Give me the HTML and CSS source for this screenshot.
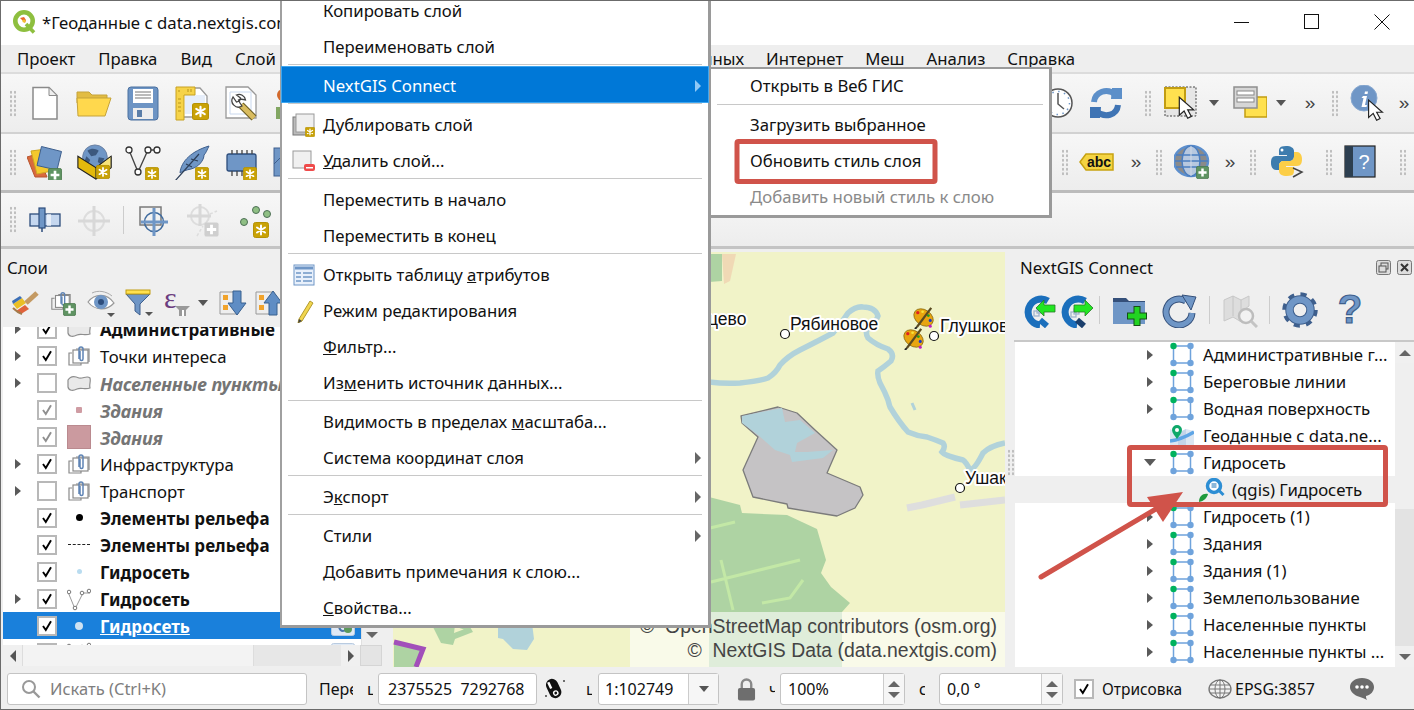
FILE: index.html
```html
<!DOCTYPE html>
<html lang="ru">
<head>
<meta charset="utf-8">
<title>QGIS</title>
<link rel="stylesheet" href="styles.css">
</head>
<body>
<svg class="sprite" xmlns="http://www.w3.org/2000/svg">
  <symbol id="bstar" viewBox="0 0 16 16"><rect x=".5" y=".5" width="15" height="15" rx="2" fill="#c9a206" stroke="#b59205"/><g stroke="#fff" stroke-width="2" stroke-linecap="round"><path d="M8 3.5v9M4 5.5l8 5M12 5.5l-8 5"/></g></symbol>
  <symbol id="bplus" viewBox="0 0 16 16"><rect x=".5" y=".5" width="15" height="15" rx="2" fill="#5f9362" stroke="#4b7a4e"/><path d="M8 3v10M3 8h10" stroke="#fff" stroke-width="3"/></symbol>
  <symbol id="bplusg" viewBox="0 0 16 16"><rect x=".5" y=".5" width="15" height="15" rx="2" fill="#cfcfcf"/><path d="M8 3v10M3 8h10" stroke="#fff" stroke-width="3"/></symbol>
  <symbol id="cursor" viewBox="0 0 14 20"><path d="M1 1v15l4-3.500 3 6 3-1.500-3-5.500h5z" fill="#fff" stroke="#222" stroke-width="1"/></symbol>
  <symbol id="info" viewBox="0 0 36 36"><circle cx="14" cy="13" r="13" fill="#6f96c6" stroke="#89a9d0"/><path d="M15 6.500h3l-.5 2.500h-3zM13 11h4l-2 9h2l-.5 2h-5l2-9h-2z" fill="#fff"/><use href="#cursor" x="16" y="14" width="19" height="23"/></symbol>
  <symbol id="doc" viewBox="0 0 36 36"><path d="M6 2.500h16l8 8V34H6z" fill="#fff" stroke="#8a8a8a" stroke-width="1.500"/><path d="M22 2.500v8h8z" fill="#eee" stroke="#8a8a8a"/></symbol>
  <symbol id="folder" viewBox="0 0 36 36"><path d="M1 18V7h12l3 3h15v8z" fill="#e2bc42" stroke="#c5a33a"/><path d="M1 13h34l-6 18H2z" fill="#ffd84d" stroke="#c5a33a"/></symbol>
  <symbol id="save" viewBox="0 0 36 36"><rect x="3" y="2" width="30" height="33" rx="3" fill="#6d94c4" stroke="#4b709f"/><rect x="8" y="4" width="20" height="14" fill="#fff"/><path d="M10 7h16M10 10h16M10 13h16" stroke="#777"/><rect x="8" y="23" width="20" height="11" fill="#eee"/><rect x="12" y="25" width="5" height="7" fill="#5b7ea8"/></symbol>
  <symbol id="tmpl" viewBox="0 0 36 36"><path d="M5 3h21l7 8v21H5z" fill="#fff" stroke="#999" stroke-width="1.300"/><path d="M11 10h20v19H11z" fill="#e6eefa"/><path d="M2 2h19v8H10v25H2z" fill="#f6d349" stroke="#c7a122"/><path d="M4 6h2M14 4v3M17 4v3M4 14h3M4 18h3M4 22h3M4 26h3" stroke="#b8951a"/><use href="#bstar" x="18" y="18" width="17" height="17"/></symbol>
  <symbol id="prop" viewBox="0 0 36 36"><path d="M3 2h22l8 8v23H3z" fill="#fff" stroke="#999" stroke-width="1.300"/><path d="M7 7h21v22H7z" fill="none" stroke="#c9d8ee"/><path d="M18 20l13 13" stroke="#6a5c22" stroke-width="7"/><path d="M18 20l13 13" stroke="#d9bc5f" stroke-width="5"/><path d="M10 12a6.500 6.500 0 0 0 9 9l-2-3-1.500-3 2-1 5 1a6.500 6.500 0 0 0-9-5l4 3-1 3-3 1z" fill="#fff" stroke="#444" stroke-width="1.300"/></symbol>
  <symbol id="part1" viewBox="0 0 36 36"><circle cx="11" cy="10" r="6" fill="#d2692c"/><rect x="4" y="22" width="9" height="12" fill="#82a662"/></symbol>
  <symbol id="addl" viewBox="0 0 36 36"><path d="M0 13l10-3 10 23-12 0z" fill="#d96a3c" stroke="#b75530"/><path d="M4 7l15-2 6 22-15 3z" fill="#f4c92d" stroke="#cfa823"/><path d="M14.500 2.500l20 5-4.500 18.500-20-4.500z" fill="#6f96c6" stroke="#3e5f8d"/><use href="#bplus" x="21" y="24" width="14" height="14"/></symbol>
  <symbol id="wms" viewBox="0 0 36 38"><circle cx="19" cy="14" r="13" fill="#6f96c6" stroke="#6a7fa0"/><path d="M11 7c5-3 8-2 12 0l-3 5-5 1zM23 14l6 1-3 7-4-3zM10 13l4 4-2 4-4-3z" fill="#3c587e"/><path d="M1 13l19 12 16-12v12L20 37 1 25z" fill="#e3b90c" stroke="#222" stroke-width="1.200"/><path d="M20 25l16-12v12L20 37z" fill="#f7e37a" stroke="#222"/><use href="#bstar" x="20" y="22" width="15" height="15"/></symbol>
  <symbol id="vec" viewBox="0 0 36 36"><path d="M4 6l9 22 10-22h9" fill="none" stroke="#444" stroke-width="1.300"/><g fill="#fff" stroke="#333" stroke-width="1.300"><circle cx="4" cy="6" r="3"/><circle cx="13" cy="28" r="3"/><circle cx="23" cy="6" r="3"/><circle cx="32" cy="6" r="3"/></g><use href="#bstar" x="20" y="23" width="14" height="14"/></symbol>
  <symbol id="feather" viewBox="0 0 36 36"><path d="M6 29C7 17 18 7 35 2c-2 4-3 7-5 9 0 5-5 12-13 14-5 1-8 2-11 4z" fill="#6f96c6" stroke="#3e5f8d"/><path d="M1 37L25 10M12 20l6 3M17 15l7 2" stroke="#2c3e58" stroke-width="1.200" fill="none"/><use href="#bstar" x="21" y="23" width="14" height="14"/></symbol>
  <symbol id="chip" viewBox="0 0 36 36"><rect x="4" y="10" width="29" height="17" rx="2" fill="#6f96c6" stroke="#2d4d7c" stroke-width="1.300"/><path d="M9 6v4M14 6v4M19 6v4M24 6v4M29 6v4M9 27v5M14 27v5M19 27v5" stroke="#444" stroke-width="1.300"/><use href="#bstar" x="20" y="23" width="14" height="14"/></symbol>
  <symbol id="part2" viewBox="0 0 36 36"><rect x="2" y="4" width="32" height="28" fill="#6f96c6" stroke="#3e5f8d"/><path d="M2 20l10-10 10 10" fill="none" stroke="#3e5f8d"/></symbol>
  <symbol id="snap" viewBox="0 0 36 36"><rect x="3" y="12" width="30" height="12" fill="#c5d7ef" stroke="#2d4d7c" stroke-width="1.300"/><rect x="20" y="12" width="4" height="12" fill="#fff" opacity=".6"/><rect x="12" y="6" width="6" height="20" fill="#6f96c6" stroke="#2d4d7c" stroke-width="1.200"/><path d="M15 26v4" stroke="#2d4d7c" stroke-width="1.500"/></symbol>
  <symbol id="crossg" viewBox="0 0 36 36"><circle cx="18" cy="19" r="10" fill="none" stroke="#ddd" stroke-width="2"/><path d="M18 4v30M2 19h32" stroke="#d8d8d8" stroke-width="3"/></symbol>
  <symbol id="crossb" viewBox="0 0 36 36"><rect x="5" y="5" width="21" height="18" fill="#f2f2f2" stroke="#7a7a7a" stroke-width="1.500"/><circle cx="19" cy="20" r="9.500" fill="none" stroke="#3e6a9e" stroke-width="1.500"/><path d="M19 6v28M6 20h27" stroke="#6f96c6" stroke-width="3"/></symbol>
  <symbol id="crossa" viewBox="0 0 36 36"><circle cx="15" cy="14" r="9" fill="none" stroke="#ddd" stroke-width="2"/><path d="M15 2v22M2 14h24" stroke="#d8d8d8" stroke-width="3"/><path d="M25 12l7-3M12 34l6-10" stroke="#ddd" stroke-width="1.500" stroke-dasharray="3 2"/><use href="#bplusg" x="19" y="20" width="15" height="15"/></symbol>
  <symbol id="dots" viewBox="0 0 36 36"><g fill="#8fbf84" stroke="#4c6f55"><circle cx="9" cy="20" r="3.500"/><circle cx="21" cy="8" r="3.500"/><circle cx="32" cy="12" r="3.500"/></g><use href="#bstar" x="18" y="20" width="16" height="16"/></symbol>
  <symbol id="clock" viewBox="0 0 36 36"><circle cx="18" cy="18" r="14" fill="#fff" stroke="#555" stroke-width="1.500"/><circle cx="18" cy="18" r="11.500" fill="none" stroke="#6f96c6" stroke-width="1.500" stroke-dasharray="1.500 4.500"/><path d="M18 8v11l6 5" fill="none" stroke="#555" stroke-width="1.500"/></symbol>
  <symbol id="refresh" viewBox="0 0 36 36"><path d="M6 17C7 7 19 2 28 10" fill="none" stroke="#5c8fc9" stroke-width="6"/><path d="M24 3h10v11H23z" fill="#5c8fc9"/><path d="M30 20C29 30 17 34 8 26" fill="none" stroke="#3f74b4" stroke-width="6"/><path d="M12 33H2V22h11z" fill="#3f74b4"/></symbol>
  <symbol id="sel" viewBox="0 0 36 36"><rect x="2" y="2" width="31" height="29" fill="#e6e6e6" stroke="#444" stroke-dasharray="2 1.500"/><rect x="2" y="3" width="20" height="20" fill="#ffe14f" stroke="#c29d12" stroke-width="2"/><use href="#cursor" x="14" y="11" width="19" height="24"/></symbol>
  <symbol id="form" viewBox="0 0 36 36"><rect x="14" y="12" width="22" height="20" fill="#ffe14f" stroke="#c29d12" stroke-width="1.500"/><rect x="3" y="2" width="23" height="21" fill="#d6d6d6" stroke="#8f8f8f" stroke-width="1.500"/><rect x="6" y="6" width="17" height="4" fill="#fff" stroke="#888"/><rect x="6" y="13" width="17" height="4" fill="#fff" stroke="#888"/></symbol>
  <symbol id="globe" viewBox="0 0 36 36"><ellipse cx="17" cy="17" rx="17" ry="15" fill="#8a8a8a" stroke="#5d8fcd" stroke-width="2.500"/><ellipse cx="17" cy="17" rx="9" ry="15" fill="#b7c8df" stroke="#4b7ec0" stroke-width="1.500"/><path d="M2 11h30M1 17h33M2 23h30" stroke="#4b7ec0" stroke-width="1.300"/><path d="M17 2v30" stroke="#d0d8e6"/><use href="#bplus" x="22" y="22" width="13" height="13"/></symbol>
  <symbol id="py" viewBox="0 0 36 36"><path d="M17 2c-7 0-7 3-7 6v3h8v1H7c-4 0-5 3-5 7s2 7 5 7h3v-4c0-3 2-5 5-5h6c2 0 4-2 4-4V7c0-3-3-5-8-5z" fill="#3d7cae"/><circle cx="13" cy="6" r="1.500" fill="#fff"/><path d="M18 32c7 0 7-3 7-6v-3h-8v-1h11c4 0 5-3 5-7s-2-7-5-7h-3v4c0 3-2 5-5 5h-6c-2 0-4 2-4 4v6c0 3 3 5 8 5z" fill="#fcce47"/><path d="M24 24l9 4-9 5" fill="none" stroke="#444" stroke-width="1.500"/></symbol>
  <symbol id="brush" viewBox="0 0 28 28"><path d="M2 15l9-6 4 5-9 6z" fill="#eabf26"/><path d="M5 22l9-6 4 4-8 5z" fill="#e0633c"/><path d="M2 15l9-6-2-2-8 5z" fill="#3c6fb6"/><path d="M15 14L26 4" stroke="#c49a63" stroke-width="5"/><path d="M2 19c3 3 6 5 9 6" stroke="#a47b4b" stroke-width="2" fill="none"/></symbol>
  <symbol id="grp" viewBox="0 0 24 24"><path d="M9 5h13v13" fill="none" stroke="#8a8a8a" stroke-width="1.200"/><rect x="6" y="6" width="15" height="13" fill="#fff" stroke="#8a8a8a" stroke-width="1.200"/><path d="M5 9H2v12h12v-2" fill="none" stroke="#8a8a8a" stroke-width="1.200"/><path d="M11 16V6a2 2 0 0 1 4 0v10a1.500 1.500 0 0 1-3 0V8" fill="none" stroke="#5f84b5" stroke-width="1.500" transform="translate(1 -1)"/></symbol>
  <symbol id="grpadd" viewBox="0 0 28 28"><use href="#grp" x="1" y="1" width="22" height="22"/><use href="#bplus" x="14" y="14" width="13" height="13"/></symbol>
  <symbol id="eye" viewBox="0 0 28 28"><path d="M1 13C8 4 20 4 27 14 20 22 8 22 1 13z" fill="#fff" stroke="#999" stroke-width="1.200"/><circle cx="14" cy="13" r="7" fill="#6f96c6"/><circle cx="14" cy="13" r="3" fill="#2d4d7c"/><path d="M5 4C11 1 19 2 25 7" fill="none" stroke="#aaa"/><path d="M20 24h8l-4 4z" fill="#555"/></symbol>
  <symbol id="filt" viewBox="0 0 28 28"><path d="M1 5h24L15 15v11l-5-4v-7z" fill="#6f96c6" stroke="#3e5f8d"/><rect x="1" y="1" width="24" height="4" fill="#ffe14f" stroke="#c29d12"/><path d="M20 23h8l-4 4z" fill="#555"/></symbol>
  <symbol id="down" viewBox="0 0 28 28"><path d="M1 3h18v22H1z" fill="#eee" stroke="#999"/><rect x="4" y="6" width="5" height="5" fill="#f1a32b"/><rect x="4" y="16" width="5" height="5" fill="#f1a32b"/><path d="M14 2h8v12h5L18 26 9 14h5z" fill="#5f8dc4" stroke="#39608f"/></symbol>
  <symbol id="up" viewBox="0 0 28 28"><path d="M1 3h18v22H1z" fill="#eee" stroke="#999"/><rect x="4" y="6" width="5" height="5" fill="#f1a32b"/><rect x="4" y="16" width="5" height="5" fill="#f1a32b"/><path d="M14 26h8V14h5L18 2 9 14h5z" fill="#5f8dc4" stroke="#39608f"/></symbol>
  <symbol id="poly" viewBox="0 0 24 24"><path d="M1 9c3-5 7-4 11-2 4 1 8-3 11 0 1 4-1 6 0 10-5 2-9-1-13 1-4 2-8 2-9-2z" fill="#e9e9e9" stroke="#8e8e8e" stroke-width="1.200"/></symbol>
  <symbol id="lin" viewBox="0 0 24 24"><path d="M1 5l7 17L16 6h7" fill="none" stroke="#9a9a9a"/><g fill="#fff" stroke="#777"><circle cx="2" cy="5" r="1.800"/><circle cx="8" cy="21" r="1.800"/><circle cx="15" cy="6" r="1.800"/><circle cx="22" cy="4" r="1.800"/></g></symbol>
  <symbol id="node" viewBox="0 -2 24 26"><path d="M3.500 2h17v17h-17z" fill="none" stroke="#6fa3dc" stroke-width="1.500"/><circle cx="20.500" cy="2" r="3.200" fill="#6fa3dc"/><circle cx="3.500" cy="19" r="3.200" fill="#6fa3dc"/><circle cx="20.500" cy="19" r="3.200" fill="#6fa3dc"/><circle cx="3.500" cy="2" r="3.200" fill="#00b25e"/></symbol>
  <symbol id="geo" viewBox="0 -2 24 26"><path d="M0 4l8 4 8-4 8 2v18l-8-2-8 2-8-2z" fill="#dbe6f2"/><path d="M8 8l8-4v18l-8 2z" fill="#c3d4e8"/><path d="M0 16c8-1 14-3 24-9" stroke="#5ea5e6" stroke-width="3.500" fill="none"/><path d="M7 0a5 5 0 0 1 5 5c0 3-3 6-5 9-2-3-5-6-5-9a5 5 0 0 1 5-5z" fill="#0fa86a"/><circle cx="7" cy="5" r="2" fill="#fff"/></symbol>
  <symbol id="qs" viewBox="0 0 26 24"><circle cx="15" cy="8" r="6.500" fill="#fff" stroke="#2d8ed4" stroke-width="3.500"/><path d="M12.500 5h5v5h-5z" fill="#8cb8da"/><path d="M18.500 11l6 6" stroke="#2d8ed4" stroke-width="3"/><path d="M0 24c0-6 4-9 9-8-1 4-4 7-9 8z" fill="#1f9a3c"/></symbol>
  <symbol id="qa" viewBox="0 0 36 36"><path d="M27 9a13 13 0 1 0-8 24" fill="none" stroke="#1b6fbc" stroke-width="7"/><path d="M19 28l7 6" stroke="#1b6fbc" stroke-width="6"/><rect x="13" y="19" width="5" height="5" fill="none" stroke="#9fb4cc" stroke-width="1.300"/><rect x="16" y="16" width="5" height="5" fill="none" stroke="#9fb4cc" stroke-width="1.300"/><path d="M15 16l8-8v5h11v7H23v4z" fill="#22e622" stroke="#2a7a2a" stroke-width=".8"/></symbol>
  <symbol id="qb" viewBox="0 0 36 36"><path d="M27 9a13 13 0 1 0-8 24" fill="none" stroke="#1b6fbc" stroke-width="7"/><path d="M19 28l7 6" stroke="#1b3f6c" stroke-width="6"/><rect x="13" y="20" width="5" height="5" fill="none" stroke="#9fb4cc" stroke-width="1.300"/><rect x="16" y="17" width="5" height="5" fill="none" stroke="#9fb4cc" stroke-width="1.300"/><path d="M35 16l-8-8v5H16v7h11v4z" fill="#22e622" stroke="#2a7a2a" stroke-width=".8"/></symbol>
  <symbol id="fplus" viewBox="0 0 36 36"><path d="M1 6h13l3 3h16v4H1z" fill="#35507a"/><path d="M1 10h32v22H1z" fill="#6f96c6"/><path d="M25 14v20M15 24h20" stroke="#174e17" stroke-width="7"/><path d="M25 15v18M16 24h18" stroke="#22d322" stroke-width="5"/></symbol>
  <symbol id="reload" viewBox="0 0 36 36"><path d="M25 9A13 13 0 1 0 31 21" fill="none" stroke="#35507a" stroke-width="7"/><path d="M25 9A13 13 0 1 0 31 21" fill="none" stroke="#6f96c6" stroke-width="5"/><path d="M21 3l14 2-5 13z" fill="#6f96c6" stroke="#35507a"/></symbol>
  <symbol id="msearch" viewBox="0 0 36 36"><path d="M2 8l9-4 8 4 8-4v10l-4 3-2 14-10-6-9 4z" fill="#ddd" stroke="#c8c8c8"/><path d="M11 4v20M19 8v10" stroke="#c4c4c4"/><circle cx="24" cy="24" r="7" fill="#f2f2f2" stroke="#bdbdbd" stroke-width="2.500"/><path d="M29 29l6 6" stroke="#c4c4c4" stroke-width="3"/></symbol>
  <symbol id="gear" viewBox="0 0 36 36"><circle cx="18" cy="18" r="15.500" fill="none" stroke="#3e5f8d" stroke-width="4.500" stroke-dasharray="6 6.170"/><circle cx="18" cy="18" r="10.500" fill="none" stroke="#3e5f8d" stroke-width="8.500"/><circle cx="18" cy="18" r="10.500" fill="none" stroke="#6f96c6" stroke-width="6.500"/></symbol>
  <symbol id="mag" viewBox="0 0 20 20"><circle cx="8" cy="8" r="6" fill="none" stroke="#999" stroke-width="2"/><path d="M12.500 12.500l6 6" stroke="#999" stroke-width="2.400"/></symbol>
  <symbol id="mouse" viewBox="0 0 22 24"><g transform="rotate(-25 11 12)"><rect x="4" y="1" width="12" height="20" rx="6" fill="#111"/><rect x="6.500" y="3" width="2.500" height="7" fill="#fff"/><circle cx="10" cy="16" r="2.800" fill="#fff"/><circle cx="10" cy="16" r="1.400" fill="#111"/></g><circle cx="20" cy="4" r="1" fill="#444"/><circle cx="2" cy="19" r="1" fill="#444"/></symbol>
  <symbol id="lock" viewBox="0 0 20 24"><path d="M5 12V7a5 5 0 0 1 10 0v5" fill="none" stroke="#888" stroke-width="2.500"/><rect x="1" y="11" width="18" height="13" rx="2" fill="#6e6e6e"/></symbol>
  <symbol id="gl" viewBox="0 0 24 20"><ellipse cx="12" cy="10" rx="11" ry="9" fill="#f2f2f2" stroke="#777" stroke-width="1.300"/><ellipse cx="12" cy="10" rx="5" ry="9" fill="none" stroke="#777"/><path d="M2 6h20M1 10h22M2 14h20M12 1v18" stroke="#777"/></symbol>
  <symbol id="chat" viewBox="0 0 24 24"><path d="M12 1C5 1 0 5 0 10c0 4 3 7 7 9 4 1 8 3 10 4-1-2-1-3-1-4 5-1 8-5 8-9 0-5-5-9-12-9z" fill="#6a6a6a"/><g fill="#fff"><circle cx="7" cy="10" r="1.800"/><circle cx="12" cy="10" r="1.800"/><circle cx="17" cy="10" r="1.800"/></g></symbol>
  <symbol id="chk" viewBox="0 0 20 20"><path d="M5 10l3.500 5L15 4" fill="none" stroke="currentColor" stroke-width="2.400"/></symbol>
  <symbol id="mdup" viewBox="0 0 24 24"><rect x="1" y="4" width="18" height="18" fill="#bbb" stroke="#777"/><rect x="4" y="1" width="18" height="18" fill="#efefef" stroke="#9a9a9a"/><use href="#bstar" x="13" y="14" width="10" height="10"/></symbol>
  <symbol id="mdel" viewBox="0 0 24 24"><rect x="1" y="2" width="18" height="17" fill="#f0f0f0" stroke="#999"/><rect x="12" y="15" width="11" height="7" rx="2" fill="#ef4b4b"/><rect x="14" y="18" width="7" height="1.500" fill="#fff"/></symbol>
  <symbol id="mtab" viewBox="0 0 24 24"><rect x="2" y="2" width="20" height="20" fill="#e8f0fb" stroke="#6f96c6"/><path d="M3 5h18" stroke="#6f96c6" stroke-width="3"/><path d="M4 10h5M11 10h9M4 14h5M11 14h9M4 18h5M11 18h9" stroke="#6f96c6" stroke-width="1.300"/></symbol>
  <symbol id="mpen" viewBox="0 0 24 24"><path d="M7 20L18 2l3 2L10 22l-4 2z" fill="#f1d64e" stroke="#b39a2e"/><path d="M6 24l1-4 3 2z" fill="#444"/></symbol>
  <symbol id="pal" viewBox="0 0 24 24"><ellipse cx="11" cy="12" rx="11" ry="8" transform="rotate(35 11 12)" fill="#e8a50f" stroke="#8a6a10" stroke-width=".8"/><circle cx="5" cy="7" r="1.700" fill="#e02020"/><circle cx="10" cy="6" r="1.400" fill="#f5e23a"/><circle cx="16" cy="10" r="1.500" fill="#20a020"/><circle cx="18" cy="15" r="1.600" fill="#1a3ac8"/><circle cx="18" cy="21" r="1.600" fill="#c020c0"/><path d="M19 2L4 22" stroke="#5a4a20" stroke-width="2.400"/><path d="M4 22l-2 2" stroke="#222" stroke-width="2"/></symbol>
  <symbol id="badge" viewBox="0 0 24 20"><rect x=".5" y=".5" width="23" height="19" rx="2" fill="#dfe9f5" stroke="#b9cbe0"/><path d="M5 5c5-4 8 2 6 6M15 14c-5 3-8-2-6-5" fill="none" stroke="#4a76aa" stroke-width="2"/><circle cx="17" cy="13" r="4" fill="#5c9a5c"/></symbol>
</svg>

<div class="window">
  <header class="titlebar">
    <svg class="qlogo" viewBox="0 0 24 24"><circle cx="12" cy="11" r="8.700" fill="none" stroke="#8ebf3f" stroke-width="4.600"/><path d="M14 14l8 8.500" stroke="#8ebf3f" stroke-width="3.600"/><path d="M8 8l5 5 1-3-2-3z" fill="#e9692c"/><circle cx="12" cy="11" r="1.600" fill="#f4c22b"/></svg>
    <span class="title">*Геоданные с data.nextgis.com</span>
    <div class="winbtns">
      <svg class="wb" viewBox="0 0 16 16"><path d="M0 8.500h15" stroke="#111"/></svg>
      <svg class="wb" viewBox="0 0 16 16"><rect x=".5" y=".5" width="14" height="14" fill="none" stroke="#111"/></svg>
      <svg class="wb" viewBox="0 0 16 16"><path d="M.5.500l15 15M15.500.5l-15 15" stroke="#111"/></svg>
    </div>
  </header>

  <nav class="menubar">
    <span>Проект</span><span>Правка</span><span>Вид</span><span>Слой</span>
    <div class="menubar-right"><span>Базы данных</span><span>Интернет</span><span>Меш</span><span>Анализ</span><span>Справка</span></div>
  </nav>

  <div class="tb tb1">
    <i class="grip"></i>
    <svg class="i36"><use href="#doc"/></svg><svg class="i36"><use href="#folder"/></svg><svg class="i36"><use href="#save"/></svg><svg class="i36"><use href="#tmpl"/></svg><svg class="i36"><use href="#prop"/></svg><svg class="i36"><use href="#part1"/></svg>
    <div class="tb-right">
      <svg class="i36"><use href="#clock"/></svg>
      <svg class="i36 g12"><use href="#refresh"/></svg>
      <i class="grip g20"></i>
      <svg class="i36 g12"><use href="#sel"/></svg>
      <i class="tri g10"></i>
      <svg class="i36 g12"><use href="#form"/></svg>
      <i class="tri g9"></i>
      <span class="more g18">»</span>
      <i class="grip g15"></i>
      <svg class="i36 g12"><use href="#info"/></svg>
      <span class="more g12">»</span>
    </div>
  </div>

  <div class="tb tb2">
    <i class="grip"></i>
    <svg class="i36"><use href="#addl"/></svg><svg class="i36"><use href="#wms"/></svg><svg class="i36"><use href="#vec"/></svg><svg class="i36"><use href="#feather"/></svg><svg class="i36"><use href="#chip"/></svg><svg class="i36"><use href="#part2"/></svg>
    <div class="tb-right">
      <span class="more">»</span>
      <i class="grip g10"></i>
      <svg class="i36 g10" viewBox="0 0 36 36"><path d="M2 18l6-8h27v16H8z" fill="#f4d442" stroke="#c7a210" stroke-width="1.500"/><text x="21" y="23" text-anchor="middle" class="svg-abc">abc</text></svg>
      <span class="more g16">»</span>
      <i class="grip g13"></i>
      <svg class="i36 g12"><use href="#globe"/></svg>
      <span class="more g14">»</span>
      <i class="grip g13"></i>
      <svg class="i36 g13"><use href="#py"/></svg>
      <i class="grip g20"></i>
      <svg class="i36 g11" viewBox="0 0 36 36"><rect x="2" y="2" width="30" height="31" fill="#6f96c6" stroke="#222" stroke-width="1.200"/><rect x="2" y="2" width="8" height="31" fill="#2d3f50"/><text x="21" y="25" text-anchor="middle" class="svg-q">?</text></svg>
      <i class="grip g20"></i>
    </div>
  </div>

  <div class="tb tb3">
    <i class="grip"></i>
    <svg class="i36"><use href="#snap"/></svg><svg class="i36"><use href="#crossg"/></svg>
    <i class="vsep g11"></i>
    <svg class="i36 g11"><use href="#crossb"/></svg>
    <svg class="i36 g14"><use href="#crossa"/></svg>
    <svg class="i36 g22"><use href="#dots"/></svg>
  </div>

  <main class="main">
    <section class="dock dock-layers">
      <div class="dock-title">Слои</div>
      <div class="layer-tools">
        <svg class="i28"><use href="#brush"/></svg><svg class="i28"><use href="#grpadd"/></svg><svg class="i28"><use href="#eye"/></svg><svg class="i28"><use href="#filt"/></svg>
        <svg class="i28" viewBox="0 0 28 28"><text x="1" y="19" class="svg-e">ε</text><path d="M12 17h15l-4 4v6H16v-6z" fill="#999"/><rect x="19" y="21" width="2" height="6" fill="#fff"/></svg>
        <i class="tri g7"></i>
        <svg class="i28 g11"><use href="#down"/></svg>
        <svg class="i28 g8"><use href="#up"/></svg>
      </div>
      <div class="layer-tree-wrap">
        <ul class="ltree">
          <li class="lrow bold"><i class="ar"></i><i class="cb"><svg><use href="#chk"/></svg></i><svg class="li"><use href="#poly"/></svg><span>Административные</span></li>
          <li class="lrow"><i class="ar"></i><i class="cb"><svg><use href="#chk"/></svg></i><svg class="li"><use href="#grp"/></svg><span>Точки интереса</span></li>
          <li class="lrow muted"><i class="ar"></i><i class="cb"></i><svg class="li"><use href="#poly"/></svg><span>Населенные пункты</span></li>
          <li class="lrow muted"><i class="ar none"></i><i class="cb off"><svg><use href="#chk"/></svg></i><span class="li sym"><i class="s-pink"></i></span><span>Здания</span></li>
          <li class="lrow muted"><i class="ar none"></i><i class="cb off"><svg><use href="#chk"/></svg></i><span class="li sym"><i class="s-bigpink"></i></span><span>Здания</span></li>
          <li class="lrow"><i class="ar"></i><i class="cb"><svg><use href="#chk"/></svg></i><svg class="li"><use href="#grp"/></svg><span>Инфраструктура</span></li>
          <li class="lrow"><i class="ar"></i><i class="cb"></i><svg class="li"><use href="#grp"/></svg><span>Транспорт</span></li>
          <li class="lrow bold"><i class="ar none"></i><i class="cb"><svg><use href="#chk"/></svg></i><span class="li sym"><i class="s-dot"></i></span><span>Элементы рельефа</span></li>
          <li class="lrow bold"><i class="ar none"></i><i class="cb"><svg><use href="#chk"/></svg></i><span class="li sym"><i class="s-dash"></i></span><span>Элементы рельефа</span></li>
          <li class="lrow bold"><i class="ar none"></i><i class="cb"><svg><use href="#chk"/></svg></i><span class="li sym"><i class="s-pale"></i></span><span>Гидросеть</span></li>
          <li class="lrow bold"><i class="ar"></i><i class="cb"><svg><use href="#chk"/></svg></i><svg class="li"><use href="#lin"/></svg><span>Гидросеть</span></li>
          <li class="lrow bold current"><i class="ar none"></i><i class="cb"><svg><use href="#chk"/></svg></i><span class="li sym"><i class="s-sel"></i></span><span class="curname">Гидросеть</span><svg class="lbadge"><use href="#badge"/></svg></li>
          <li class="lrow bold"><i class="ar none"></i><i class="cb"><svg><use href="#chk"/></svg></i><svg class="li"><use href="#lin"/></svg><svg class="lbadge"><use href="#badge"/></svg></li>
        </ul>
        <div class="vscroll"><i class="tri-d"></i></div>
      </div>
      <div class="hscroll">
        <span class="hbtn"><i class="tri-l"></i></span>
        <span class="hthumb"></span>
        <span class="htrack"></span>
        <span class="hbtn"><i class="tri-r"></i></span>
        <span class="hcorner"></span>
      </div>
    </section>

    <section class="map">
      <svg class="mapsvg" viewBox="393 252 612 415">
        <rect x="393" y="252" width="612" height="415" fill="#f1f3c8"/>
        <path d="M709 254h13v27l-13 1z" fill="#aed3a3"/>
        <path d="M722 254h14l-6 27-6 3z" fill="#f0d9b5"/>
        <path d="M709 497l31 8 2 8 45 2 30 14 9 31-5 13 10 14 19 16-8 9v60H709z" fill="#aed3a3"/>
        <path d="M710 528l25-6M711 582l89-22M721 560l12 50M762 603l28-5 13-18" fill="none" stroke="#c3e8a6" stroke-width="3"/>
        <path d="M709 382Q725 384 740 383Q760 381 768 378Q776 373 780 365Q788 356 800 350Q820 340 833 333Q842 322 848 313Q856 306 863 307Q875 307 878 316Q876 322 870 325Q864 331 868 338Q876 345 888 349Q895 354 891 361Q884 367 878 371Q877 376 880 383Q885 392 888 400Q889 404 890 407Q899 422 908 432Q917 436 927 437Q936 440 943 443Q946 447 942 452Q945 456 963 460Q966 462 970 470Q975 469 983 453Q990 446 1005 443" fill="none" stroke="#b1d2da" stroke-width="5.500"/>
        <path d="M912 403l3 7" fill="none" stroke="#b1d2da" stroke-width="3"/>
        <path d="M741 416L778 407 797 413 815 430 837 450 827 473 860 487 863 495 855 508 837 516 788 508 787 504 753 497 743 470 758 437 742 423z" fill="#c5c3c5" stroke="#7b7b7b" stroke-width="1.300" stroke-linejoin="round"/>
        <path d="M742 416L782 408 785 422 800 420 815 433 797 443 795 452 807 452 833 450 823 458 792 462 790 455 775 450 758 435 742 423z" fill="#b1d2da"/>
        <path d="M907 508L922 505 955 497M960 505L1005 500" fill="none" stroke="#dedede" stroke-width="7"/>
        <path d="M433 627l22-2-1 8 16-6 3 5-18 7-2 6-12-2-4-8zM456 627l16-2-3 6z" fill="#aed3a3"/>
        <path d="M498 623h34l2 16-7 11-14-1-10-10-5-1z" fill="#b1d2da"/>
        <path d="M394 642v25h22l7-18z" fill="#aed3a3"/>
        <path d="M394 642l29 7-7 18" fill="none" stroke="#a24fba" stroke-width="5"/>
        <rect x="630" y="612" width="375" height="55" fill="#fff" opacity=".6"/>
        <text x="997" y="633" text-anchor="end" class="m-attr">©  OpenStreetMap contributors (osm.org)</text>
        <text x="997" y="657" text-anchor="end" class="m-attr">©  NextGIS Data (data.nextgis.com)</text>
        <g class="m-pt"><circle cx="785" cy="334" r="4.500"/><circle cx="934" cy="336" r="4.500"/><circle cx="960" cy="488" r="4.500"/></g>
        <text x="708" y="325" class="m-lbl">цево</text>
        <text x="790" y="330" class="m-lbl">Рябиновое</text>
        <text x="940" y="332" class="m-lbl">Глушково</text>
        <text x="965" y="484" class="m-lbl">Ушаково</text>
        <use href="#pal" x="913" y="306" width="23" height="23"/>
        <use href="#pal" x="903" y="327" width="23" height="23"/>
      </svg>
    </section>

    <section class="dock dock-connect">
      <div class="dock-title connect-title">NextGIS Connect
        <span class="dockbtns">
          <svg class="db" viewBox="0 0 15 15"><rect x=".5" y=".5" width="14" height="14" rx="2" fill="#ddd" stroke="#777"/><rect x="5" y="3" width="7" height="6" fill="none" stroke="#555"/><rect x="3" y="6" width="7" height="6" fill="#ddd" stroke="#555"/></svg>
          <svg class="db" viewBox="0 0 15 15"><rect x=".5" y=".5" width="14" height="14" rx="2" fill="#ddd" stroke="#777"/><path d="M4 4l7 7M11 4l-7 7" stroke="#333" stroke-width="2"/></svg>
        </span>
      </div>
      <div class="connect-tools">
        <svg class="i36"><use href="#qa"/></svg><svg class="i36 g1"><use href="#qb"/></svg>
        <i class="vsep g5"></i>
        <svg class="i36 g12"><use href="#fplus"/></svg>
        <svg class="i36 g13"><use href="#reload"/></svg>
        <i class="vsep g12"></i>
        <svg class="i36 g12"><use href="#msearch"/></svg>
        <i class="vsep g11"></i>
        <svg class="i36 g12"><use href="#gear"/></svg>
        <svg class="i36 g14" viewBox="0 0 36 36"><text x="18" y="31" text-anchor="middle" class="svg-qm">?</text></svg>
      </div>
      <div class="ctree-wrap">
        <ul class="ctree">
          <li class="crow"><i class="ar"></i><svg class="ci"><use href="#node"/></svg><span>Административные г...</span></li>
          <li class="crow"><i class="ar"></i><svg class="ci"><use href="#node"/></svg><span>Береговые линии</span></li>
          <li class="crow"><i class="ar"></i><svg class="ci"><use href="#node"/></svg><span>Водная поверхность</span></li>
          <li class="crow"><i class="ar none"></i><svg class="ci"><use href="#geo"/></svg><span>Геоданные с data.ne...</span></li>
          <li class="crow"><i class="ar open"></i><svg class="ci"><use href="#node"/></svg><span>Гидросеть</span></li>
          <li class="crow child"><svg class="qi"><use href="#qs"/></svg><span>(qgis) Гидросеть</span></li>
          <li class="crow"><i class="ar"></i><svg class="ci"><use href="#node"/></svg><span>Гидросеть (1)</span></li>
          <li class="crow"><i class="ar"></i><svg class="ci"><use href="#node"/></svg><span>Здания</span></li>
          <li class="crow"><i class="ar"></i><svg class="ci"><use href="#node"/></svg><span>Здания (1)</span></li>
          <li class="crow"><i class="ar"></i><svg class="ci"><use href="#node"/></svg><span>Землепользование</span></li>
          <li class="crow"><i class="ar"></i><svg class="ci"><use href="#node"/></svg><span>Населенные пункты</span></li>
          <li class="crow"><i class="ar"></i><svg class="ci"><use href="#node"/></svg><span>Населенные пункты ...</span></li>
        </ul>
        <div class="cscroll">
          <span class="cbtn"><i class="tri-u"></i></span>
          <span class="cthumb"></span>
          <span class="ctrack"></span>
          <span class="cbtn"><i class="tri-d"></i></span>
        </div>
      </div>
    </section>
    <i class="dockgrip"></i>
  </main>

  <footer class="status">
    <div class="search"><svg class="mag"><use href="#mag"/></svg><span>Искать (Ctrl+K)</span></div>
    <span class="lab clip g12">Перем</span>
    <span class="lab g14 clip2">ц</span>
    <div class="inp coord g5">2375525&nbsp; 7292768</div>
    <svg class="st-mouse g7"><use href="#mouse"/></svg>
    <span class="lab clip2 g20">ц</span>
    <div class="inp scale g6"><span class="scale-v">1:102749</span><span class="combo"><i class="tri"></i></span></div>
    <svg class="st-lock g18"><use href="#lock"/></svg>
    <span class="lab clip2 g13">ч</span>
    <div class="inp spin zoom g5"><span class="spin-v">100%</span><span class="spinb"><i class="tri-u"></i><i class="tri-d"></i></span></div>
    <span class="lab clip2 g14">с</span>
    <div class="inp spin rot g14"><span class="spin-v">0,0 °</span><span class="spinb"><i class="tri-u"></i><i class="tri-d"></i></span></div>
    <i class="cb st-cb g11"><svg><use href="#chk"/></svg></i>
    <span class="lab render g8">Отрисовка</span>
    <svg class="st-gl g26"><use href="#gl"/></svg>
    <span class="lab g3">EPSG:3857</span>
    <svg class="st-chat g35"><use href="#chat"/></svg>
  </footer>

  <div class="ctx">
    <div class="mi"><i class="mic"></i>Копировать слой</div>
    <div class="mi"><i class="mic"></i>Переименовать слой</div>
    <hr class="ms">
    <div class="mi hot"><i class="mic"></i>NextGIS Connect<i class="mar"></i></div>
    <hr class="ms">
    <div class="mi"><svg class="mic"><use href="#mdup"/></svg><span><u>Д</u>ублировать слой</span></div>
    <div class="mi"><svg class="mic"><use href="#mdel"/></svg><span><u>У</u>далить слой...</span></div>
    <hr class="ms">
    <div class="mi"><i class="mic"></i>Переместить в начало</div>
    <div class="mi"><i class="mic"></i>Переместить в конец</div>
    <hr class="ms">
    <div class="mi"><svg class="mic"><use href="#mtab"/></svg><span>Открыть таблицу <u>а</u>трибутов</span></div>
    <div class="mi"><svg class="mic"><use href="#mpen"/></svg><span>Режим редактирования</span></div>
    <div class="mi"><i class="mic"></i><span><u>Ф</u>ильтр...</span></div>
    <div class="mi"><i class="mic"></i><span>Из<u>м</u>енить источник данных...</span></div>
    <hr class="ms">
    <div class="mi"><i class="mic"></i><span>Видимость в пределах <u>м</u>асштаба...</span></div>
    <div class="mi"><i class="mic"></i>Система координат слоя<i class="mar"></i></div>
    <hr class="ms">
    <div class="mi"><i class="mic"></i><span>Э<u>к</u>спорт</span><i class="mar"></i></div>
    <hr class="ms">
    <div class="mi"><i class="mic"></i>Стили<i class="mar"></i></div>
    <div class="mi"><i class="mic"></i>Добавить примечания к слою...</div>
    <div class="mi"><i class="mic"></i><span><u>С</u>войства...</span></div>
  </div>

  <div class="sub">
    <div class="si first">Открыть в Веб ГИС</div>
    <hr class="ss">
    <div class="si">Загрузить выбранное</div>
    <div class="si">Обновить стиль слоя</div>
    <div class="si dis">Добавить новый стиль к слою</div>
  </div>

  <svg class="marks" viewBox="0 0 1414 710">
    <rect x="737" y="141.500" width="198" height="40" rx="1.500"/>
    <rect x="1129.500" y="447.500" width="256" height="57" rx="1.500"/>
    <path class="shaft" d="M1041 577l125-74"/>
    <path class="head" d="M1183 492l-36 5 16 25z"/>
  </svg>
</div>
</body>
</html>
```
FILE: styles.css
```css
* { box-sizing: border-box; }
html, body { margin: 0; padding: 0; width: 1414px; height: 710px; overflow: hidden; background: #fff; }
body { font: 16.750px/22px "Noto Sans", "Open Sans", sans-serif; color: #111; }
ul { margin: 0; padding: 0; list-style: none; }
.sprite { position: absolute; width: 0; height: 0; overflow: hidden; }

.window { position: relative; width: 1414px; height: 710px; overflow: hidden; border-top: 1px solid #6b6b6b; border-left: 1px solid #6b6b6b; border-bottom: 1px solid #6b6b6b; background: #efefef; }

.titlebar { height: 44px; background: #fff; display: flex; align-items: center; padding-left: 11px; }
.qlogo { width: 24px; height: 24px; margin-top: -2px; }
.title { margin-left: 6px; white-space: nowrap; }
.winbtns { margin-left: auto; display: flex; gap: 54px; padding-right: 24px; margin-top: -2px; }
.wb { width: 16px; height: 16px; }

.menubar { height: 29px; background: #eee; display: flex; align-items: center; padding: 1px 0 0 16px; gap: 23px; border-bottom: 2px solid #dcdcdc; white-space: nowrap; }
.menubar-right { margin-left: auto; display: flex; gap: 22px; padding-right: 339px; }

.tb { display: flex; align-items: center; padding-left: 8px; gap: 13px; background: linear-gradient(#f7f7f7, #ededed); }
.tb1 { height: 60px; border-bottom: 2px solid #d2d2d2; }
.tb2 { height: 59px; border-bottom: 3px solid #bcbcbc; }
.tb3 { height: 56px; border-bottom: 3px solid #c4c4c4; }
.tb > .grip { margin-right: -2px; }
.tb-right { margin-left: auto; display: flex; align-items: center; padding-right: 4px; flex: none; }
.tb2 .tb-right { padding-right: 8px; }
.i36 { width: 36px; height: 36px; flex: none; display: block; overflow: visible; }
.i28 { width: 28px; height: 28px; flex: none; display: block; overflow: visible; }
.grip { flex: none; width: 7px; height: 27px; background-image: radial-gradient(circle, #bdbdbd 1px, transparent 1.300px); background-size: 4px 4.500px; }
.vsep { flex: none; width: 1px; height: 28px; background: #ccc; }
.tri { flex: none; width: 0; height: 0; border-left: 5.500px solid transparent; border-right: 5.500px solid transparent; border-top: 6px solid #555; }
.more { flex: none; width: 12px; font: 19px/20px "Liberation Sans", sans-serif; color: #444; text-align: center; }
.g1 { margin-left: 1px; } .g3 { margin-left: 3px; } .g5 { margin-left: 5px; } .g6 { margin-left: 6px; } .g7 { margin-left: 7px; } .g8 { margin-left: 8px; }
.g9 { margin-left: 9px; } .g10 { margin-left: 10px; } .g11 { margin-left: 11px; } .g12 { margin-left: 12px; } .g13 { margin-left: 13px; }
.g14 { margin-left: 14px; } .g15 { margin-left: 15px; } .g16 { margin-left: 16px; } .g18 { margin-left: 18px; } .g20 { margin-left: 20px; }
.g22 { margin-left: 22px; } .g26 { margin-left: 26px; } .g35 { margin-left: 35px; }
.tb3 .vsep.g11 { margin-left: -2px; }
.tb3 .i36.g11 { margin-left: -2px; }
.tb3 .g14 { margin-left: 1px; }
.tb3 .g22 { margin-left: 1px; }

.main { height: 421px; display: flex; position: relative; background: #efefef; }
.dock { display: flex; flex-direction: column; flex: none; }
.dock-layers { width: 382px; }
.dock-title { height: 35px; padding: 8px 0 0 6px; line-height: 22px; }
.layer-tools { height: 43px; padding: 0 0 5px 10px; display: flex; align-items: center; gap: 10px; }
.layer-tools .g7 { margin-left: -3px; }
.layer-tools .g11 { margin-left: 1px; }
.layer-tools .g8 { margin-left: -2px; }
.layer-tree-wrap { display: flex; height: 318px; padding-left: 2px; }
.ltree { width: 358px; height: 318px; overflow: hidden; background: #fff; padding-top: 0; }
.lrow { height: 27px; display: flex; align-items: center; padding-left: 12px; white-space: nowrap; }
.lrow > span { padding-top: 2px; }
.lrow > .sym { padding-top: 0; }
.lrow:first-child { margin-top: -12px; }
.ar { flex: none; width: 6px; height: 0; border-left: 6px solid #5a5a5a; border-top: 5px solid transparent; border-bottom: 5px solid transparent; }
.ar.none { border-color: transparent; }
.ar.open { width: 12px; border-left: 6px solid transparent; border-right: 6px solid transparent; border-top: 7px solid #5a5a5a; border-bottom: 0; margin-left: -3px; margin-right: -3px; }
.cb { flex: none; display: block; width: 20px; height: 20px; margin-left: 16px; border: 2px solid #b8b8b8; background: #fff; color: #000; }
.cb svg { display: block; width: 16px; height: 16px; }
.cb.off { color: #8f8f8f; }
.li { flex: none; width: 24px; height: 24px; margin: 0 9px 0 10px; }
.sym { display: flex; align-items: center; justify-content: center; }
.s-pink { width: 6px; height: 6px; border-radius: 1px; background: #cf9ca3; }
.s-bigpink { width: 24px; height: 24px; background: #cb9a9f; border: 1px solid #ba8a8f; }
.s-dot { width: 7px; height: 7px; border-radius: 50%; background: #000; }
.s-dash { width: 22px; border-top: 1px dashed #222; }
.s-pale { width: 5px; height: 5px; border-radius: 50%; background: #b9dcf0; }
.s-sel { width: 8px; height: 8px; border-radius: 50%; background: #cfe2f2; }
.bold { font-weight: 700; font-size: 17px; }
.muted { font-weight: 700; font-style: italic; font-size: 18.200px; color: #757575; }
.current { background: #1a80db; color: #fff; }
.curname { text-decoration: underline; }
.lbadge { margin-left: auto; margin-right: 6px; width: 24px; height: 20px; flex: none; }
.vscroll { flex: none; width: 21px; background: #efefef; display: flex; align-items: flex-end; justify-content: center; padding-bottom: 7px; border-left: 1px solid #e0e0e0; }
.tri-d { display: block; width: 0; height: 0; border-left: 6px solid transparent; border-right: 6px solid transparent; border-top: 6px solid #666; }
.tri-u { display: block; width: 0; height: 0; border-left: 6px solid transparent; border-right: 6px solid transparent; border-bottom: 6px solid #666; }
.tri-l { display: block; width: 0; height: 0; border-top: 6px solid transparent; border-bottom: 6px solid transparent; border-right: 6px solid #555; }
.tri-r { display: block; width: 0; height: 0; border-top: 6px solid transparent; border-bottom: 6px solid transparent; border-left: 6px solid #555; }
.hscroll { display: flex; height: 21px; margin-left: 2px; width: 379px; }
.hbtn { width: 19px; flex: none; background: #f0f0f0; display: flex; align-items: center; justify-content: center; }
.hthumb { width: 232px; flex: none; background: #f3f3f3; border-left: 1px solid #ddd; border-right: 1px solid #ddd; }
.htrack { width: 87px; flex: none; background: #e7e7e7; }
.hcorner { width: 22px; flex: none; background: #e4e4e4; border: 1px solid #d5d5d5; }

.map { flex: none; width: 612px; margin: 3px 0 3px 10px; height: 415px; }
.mapsvg { display: block; width: 612px; height: 415px; }
.m-lbl { font: 17.500px "Liberation Sans", sans-serif; fill: #111; stroke: #fff; stroke-width: 4px; paint-order: stroke; stroke-linejoin: round; }
.m-attr { font: 19.400px "Liberation Sans", sans-serif; fill: #444; white-space: pre; }
.m-pt circle { fill: #fff; stroke: #111; stroke-width: 1.200px; }

.dock-connect { width: 400px; margin-left: 9px; }
.connect-title { position: relative; display: flex; }
.dockbtns { margin-left: auto; display: flex; gap: 6px; padding-right: 2px; margin-top: 3px; }
.db { width: 15px; height: 15px; }
.connect-tools { height: 56px; display: flex; align-items: center; padding: 0 0 5px 7px; }
.ctree-wrap { display: flex; height: 327px; padding-left: 1px; border-top: 2px solid #c8c8c8; }
.ctree { width: 380px; background: #fff; overflow: hidden; }
.crow { height: 27px; display: flex; align-items: center; padding-left: 132px; white-space: nowrap; }
.crow:first-child { margin-top: -1px; }
.crow.child { background: #efefef; padding-left: 185px; }
.ci { flex: none; width: 24px; height: 26px; margin: 0 9px 0 17px; overflow: visible; }
.qi { flex: none; width: 26px; height: 24px; margin-right: 7px; margin-left: -1px; }
.cscroll { flex: none; width: 19px; display: flex; flex-direction: column; background: #e3e3e3; }
.cbtn { flex: none; height: 21px; background: #f0f0f0; display: flex; align-items: center; justify-content: center; }
.cthumb { flex: none; height: 146px; background: #efefef; }
.ctrack { flex: 1; background: #e3e3e3; }
.dockgrip { position: absolute; left: 1006px; top: 200px; width: 7px; height: 27px; background-image: radial-gradient(circle, #bdbdbd 1px, transparent 1.300px); background-size: 4px 4.500px; }

.status { height: 39px; display: flex; align-items: center; padding-left: 6px; background: #efefef; white-space: nowrap; padding-bottom: 1px; font-size: 16px; }
.search { flex: none; width: 300px; height: 32px; background: #fff; border: 1px solid #c4c4c4; border-radius: 3px; display: flex; align-items: center; padding-left: 13px; color: #7e7e7e; font-size: 16.500px; }
.mag { width: 20px; height: 20px; margin-right: 9px; }
.lab { flex: none; }
.render { font-size: 15.500px; }
.clip { width: 34px; overflow: hidden; }
.clip2 { width: 6px; overflow: hidden; }
.inp { flex: none; height: 32px; background: #fff; border: 1px solid #c4c4c4; border-radius: 3px; display: flex; align-items: center; }
.coord { width: 159px; padding-left: 9px; }
.scale { width: 121px; padding-left: 6px; }
.scale-v { width: 83px; }
.combo { flex: 1; height: 100%; border-left: 1px solid #ccc; display: flex; align-items: center; justify-content: center; background: #f6f6f6; }
.spin { justify-content: space-between; padding-left: 7px; }
.zoom { width: 125px; }
.rot { width: 124px; }
.spinb { width: 21px; height: 100%; border-left: 1px solid #ccc; display: flex; flex-direction: column; align-items: center; justify-content: center; gap: 5px; background: #f6f6f6; }
.st-mouse { flex: none; width: 22px; height: 24px; }
.st-lock { flex: none; width: 19px; height: 24px; }
.st-gl { flex: none; width: 24px; height: 20px; }
.st-chat { flex: none; width: 24px; height: 24px; }
.st-cb { margin-left: 11px; }

.ctx { position: absolute; left: 279px; top: -9px; width: 431px; background: #fff; border-left: 2px solid #a0a0a0; border-right: 3px solid #9a9a9a; border-bottom: 3px solid #9a9a9a; z-index: 5; }
.mi { height: 36px; display: flex; align-items: center; padding: 2px 7px 0 10px; white-space: nowrap; }
.mic { flex: none; display: block; width: 24px; height: 24px; margin-right: 7px; }
.mar { margin-left: auto; flex: none; width: 0; height: 0; border-left: 6px solid #666; border-top: 6px solid transparent; border-bottom: 6px solid transparent; }
.ms { margin: 0 6px; height: 3px; border: 0; border-top: 1px solid #c8c8c8; background: none; }
.mi.hot { background: #0078d7; color: #fff; box-shadow: 0 0 0 1px #3ea6f0; position: relative; height: 35px; margin-bottom: 1px; }
.hot .mar { border-left-color: #8fc8f6; }
.sub { position: absolute; left: 708px; top: 66px; width: 343px; background: #fff; border: 2px solid #9a9a9a; border-right-width: 3px; border-bottom-width: 3px; z-index: 6; padding-bottom: 0; }
.si { height: 36px; display: flex; align-items: center; padding: 0 0 0 39px; white-space: nowrap; }
.si.first { margin-top: -1px; }
.ss { margin: 0 6px; height: 3px; border: 0; border-top: 1px solid #c8c8c8; }
.dis { color: #8a8a8a; }

.marks { position: absolute; left: -1px; top: -1px; width: 1414px; height: 710px; z-index: 7; pointer-events: none; }
.marks rect { fill: none; stroke: #d0534a; stroke-width: 5; }
.shaft { fill: none; stroke: #d0534a; stroke-width: 5; stroke-linecap: round; }
.head { fill: #d0534a; }

.svg-abc { font: 700 14px "Liberation Sans", sans-serif; fill: #111; }
.svg-q { font: 20px "Liberation Sans", sans-serif; fill: #fff; }
.svg-e { font: 30px "Liberation Serif", serif; fill: #6c3d80; }
.svg-qm { font: 700 40px "Liberation Sans", sans-serif; fill: #6f96c6; stroke: #3e5f8d; stroke-width: 1.200px; }
```
